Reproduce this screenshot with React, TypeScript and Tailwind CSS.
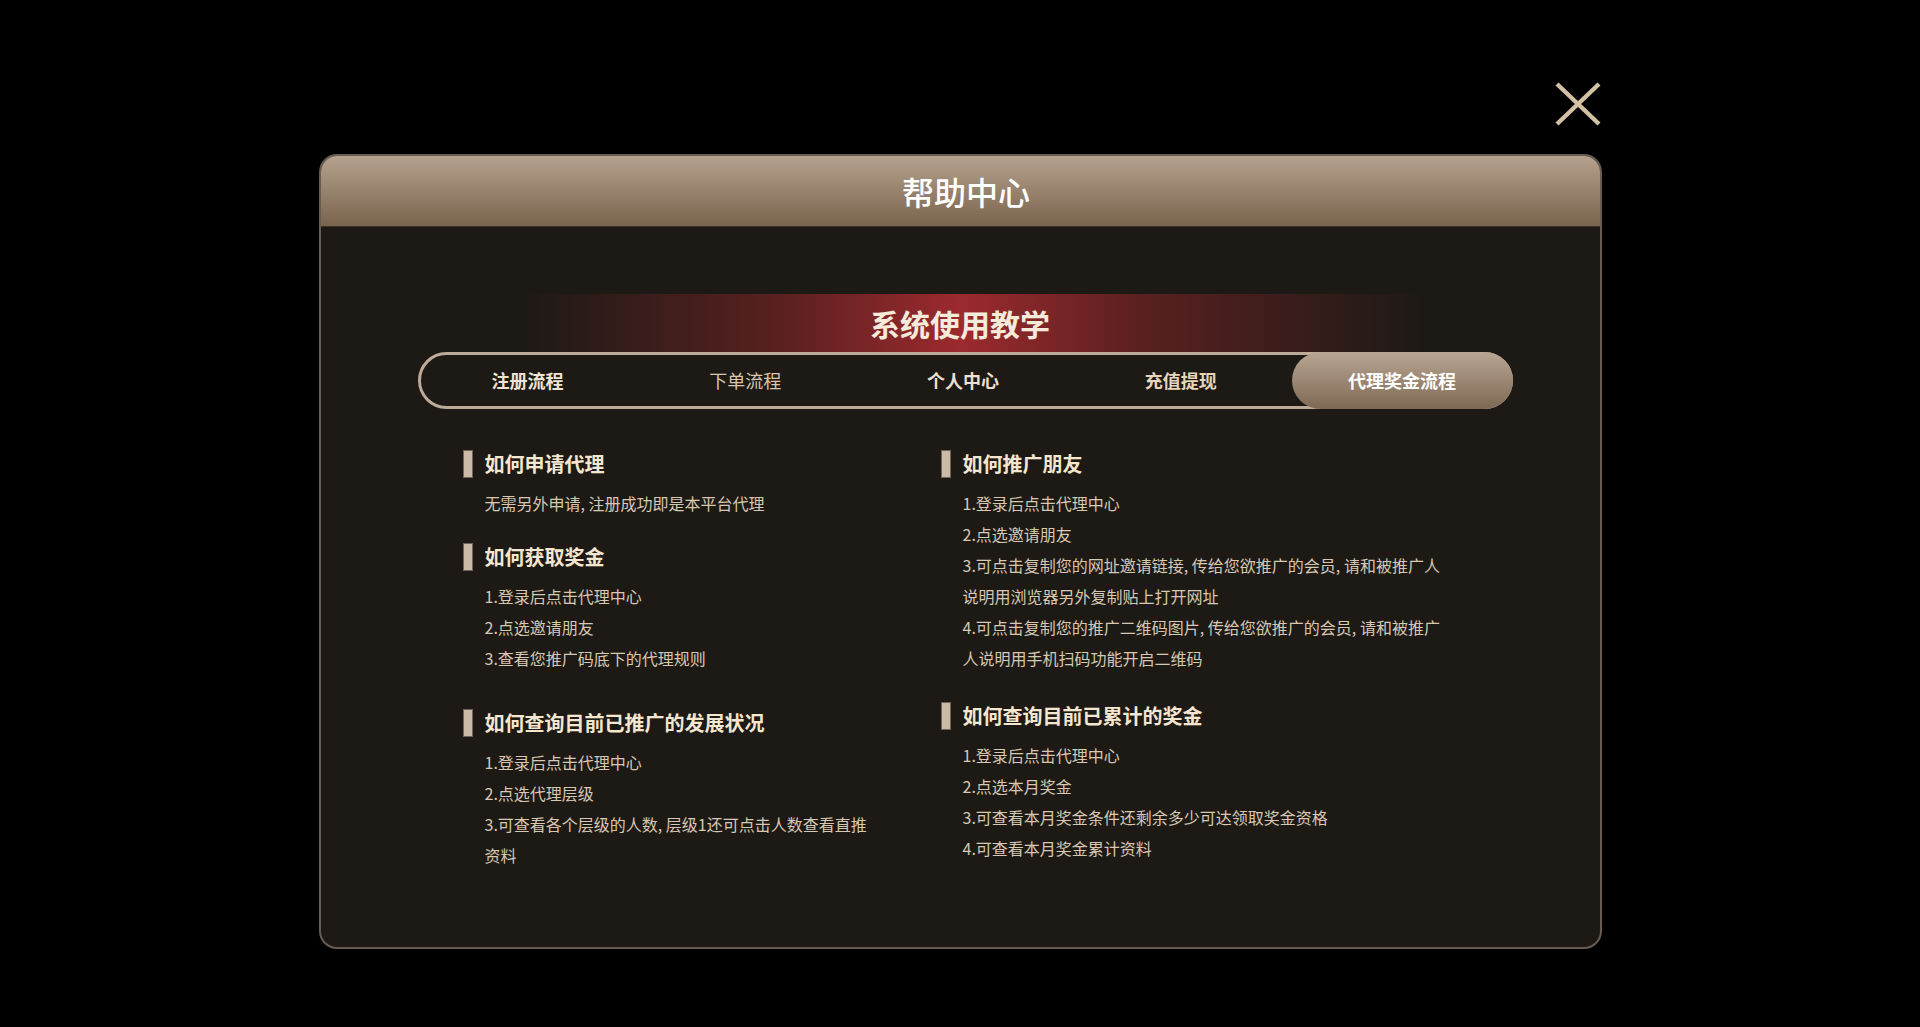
import React from "react";

const font = { fontFamily: '"Noto Sans CJK SC", "Noto Sans", sans-serif' };

type Section = {
  title: string;
  lines: string[];
  gap: string;
};

const tabs = [
  { label: "注册流程", cls: "font-bold text-[#efe4d4]" },
  { label: "下单流程", cls: "font-normal text-[#d8c6ae]" },
  { label: "个人中心", cls: "font-semibold text-[#ecdfcc]" },
  { label: "充值提现", cls: "font-bold text-[#e6d4bb]" },
];

const leftSections: Section[] = [
  {
    title: "如何申请代理",
    lines: ["无需另外申请, 注册成功即是本平台代理"],
    gap: "mt-0",
  },
  {
    title: "如何获取奖金",
    lines: ["1.登录后点击代理中心", "2.点选邀请朋友", "3.查看您推广码底下的代理规则"],
    gap: "mt-[24px]",
  },
  {
    title: "如何查询目前已推广的发展状况",
    lines: [
      "1.登录后点击代理中心",
      "2.点选代理层级",
      "3.可查看各个层级的人数, 层级1还可点击人数查看直推资料",
    ],
    gap: "mt-[35px]",
  },
];

const rightSections: Section[] = [
  {
    title: "如何推广朋友",
    lines: [
      "1.登录后点击代理中心",
      "2.点选邀请朋友",
      "3.可点击复制您的网址邀请链接, 传给您欲推广的会员, 请和被推广人说明用浏览器另外复制贴上打开网址",
      "4.可点击复制您的推广二维码图片, 传给您欲推广的会员, 请和被推广人说明用手机扫码功能开启二维码",
    ],
    gap: "mt-0",
  },
  {
    title: "如何查询目前已累计的奖金",
    lines: [
      "1.登录后点击代理中心",
      "2.点选本月奖金",
      "3.可查看本月奖金条件还剩余多少可达领取奖金资格",
      "4.可查看本月奖金累计资料",
    ],
    gap: "mt-[28px]",
  },
];

function HelpSection({ section, textWidth }: { section: Section; textWidth: string }) {
  return (
    <div className={section.gap}>
      {/* heading with beige marker */}
      <div className="flex h-[28px] items-center gap-3">
        <span className="h-[28px] w-[10px] border border-[#6f6559] bg-[#cbbba6]" />
        <h3 className="text-[20px] font-bold leading-[28px] text-[#f4e6cf]">{section.title}</h3>
      </div>
      <div className={`mt-[10px] pl-[22px] ${textWidth}`}>
        {section.lines.map((line) => (
          <p key={line} className="text-[16px] leading-[31px] text-[#d8c8b2]">
            {line}
          </p>
        ))}
      </div>
    </div>
  );
}

export default function App() {
  return (
    <div className="min-h-screen bg-black pt-[82px]" style={font}>
      <div className="mx-auto flex w-[1283px] flex-col">
        {/* Close button */}
        <div className="flex justify-end pr-[1px]">
          <button className="h-[44px] w-[46px]" aria-label="close">
            <svg width="46" height="44" viewBox="0 0 46 44">
              <line x1="2" y1="2" x2="44" y2="42" stroke="#d4c1a5" strokeWidth="4.4" />
              <line x1="44" y1="2" x2="2" y2="42" stroke="#d4c1a5" strokeWidth="4.4" />
            </svg>
          </button>
        </div>

        {/* Modal */}
        <div className="mt-[28px] h-[795px] overflow-hidden rounded-[18px] border-2 border-[#675c50] bg-[#1d1a16]">
          {/* Header */}
          <div className="flex h-[71px] items-center justify-center border-b border-[#3d342b] bg-gradient-to-b from-[#b5a28e] to-[#7b644e] pl-[12px]">
            <h1 className="text-[32px] font-medium text-white">帮助中心</h1>
          </div>

          {/* Banner */}
          <div className="mt-[67px] flex h-[58px] items-center justify-center bg-[linear-gradient(90deg,rgba(29,26,22,0)_0%,rgba(29,26,22,0)_16%,#5a2020_36%,#9c2a2e_50%,#5a2020_64%,rgba(29,26,22,0)_86%,rgba(29,26,22,0)_100%)]">
            <h2 className="text-[30px] font-bold text-[#f6eadb]">系统使用教学</h2>
          </div>

          {/* Tabs */}
          <div className="ml-[97px] grid h-[57px] w-[1095px] grid-cols-5 rounded-full border-[3px] border-[#bcab98]">
            {tabs.map((t) => (
              <div key={t.label} className={`flex items-center justify-center pr-[4px] text-[18px] ${t.cls}`}>
                {t.label}
              </div>
            ))}
            <div className="-my-[3px] -mr-[3px] flex items-center justify-center rounded-full bg-gradient-to-b from-[#b9a693] to-[#7e6954] text-[18px] font-bold text-white">
              代理奖金流程
            </div>
          </div>

          {/* Content */}
          <div className="ml-[142px] mt-[41px] flex">
            <div className="w-[478px]">
              {leftSections.map((s) => (
                <HelpSection key={s.title} section={s} textWidth="w-[412px]" />
              ))}
            </div>
            <div className="w-[507px]">
              {rightSections.map((s) => (
                <HelpSection key={s.title} section={s} textWidth="w-[507px]" />
              ))}
            </div>
          </div>
        </div>
      </div>
    </div>
  );
}
